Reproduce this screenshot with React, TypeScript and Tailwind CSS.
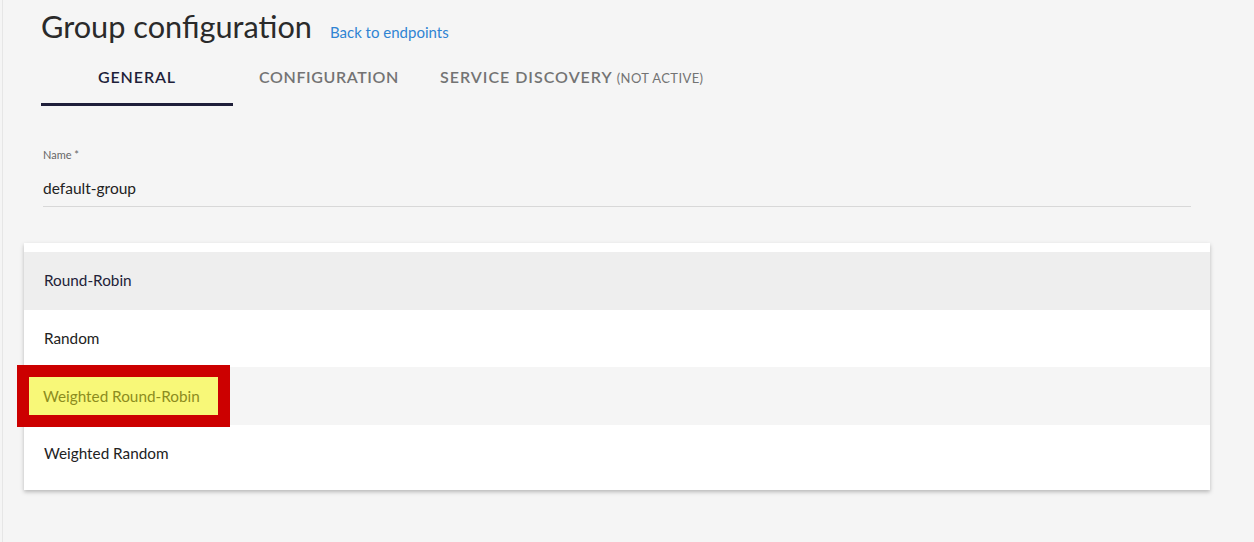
import React from "react";

const font = { fontFamily: '"Lato", "Open Sans", sans-serif' };

export default function App() {
  const items = [
    { label: "Round-Robin", bg: "bg-[#eeeeee]", color: "text-[#222238]" },
    { label: "Random", bg: "bg-white", color: "text-[#222222]" },
    { label: "Weighted Round-Robin", bg: "bg-[#f5f5f5]", color: "text-[#222222]" },
    { label: "Weighted Random", bg: "bg-white", color: "text-[#222222]" },
  ];
  return (
    <div className="relative w-[1254px] h-[542px] bg-[#f5f5f5] overflow-hidden font-['Lato',sans-serif]" style={font}>
      <div className="absolute left-[2px] top-0 bottom-0 w-px bg-[#e6e6e6]" />
      <div className="pl-[41px] pt-[7px]">
        <div className="flex items-baseline h-[40px]">
          <h1 className="text-[30.7px] leading-[40px] text-[#2a2a2a] font-normal">Group configuration</h1>
          <a className="ml-[18px] text-[15px] text-[#2f84d3]">Back to endpoints</a>
        </div>
        <div className="flex h-[59px]">
          <div className="w-[192px] flex flex-col">
            <div className="flex-1 flex items-center justify-center pt-[3px] text-[16px] font-semibold tracking-[0.9px] text-[#1f1f3a]">GENERAL</div>
            <div className="h-[3px] bg-[#1f1f3a]" />
          </div>
          <div className="w-[192px] flex items-center justify-center text-[16px] font-semibold tracking-[0.6px] text-[#737373]">CONFIGURATION</div>
          <div className="flex items-center pl-[15px] pt-[2px] text-[#737373]">
            <span className="text-[16px] font-semibold tracking-[1px] leading-[20px]">
              SERVICE DISCOVERY<span className="ml-[4px] text-[13px] font-normal tracking-[0.4px]">(NOT ACTIVE)</span>
            </span>
          </div>
        </div>
        <div className="ml-[2px] mt-[42px] w-[1148px]">
          <div className="text-[11px] leading-[14px] text-[#666666]">Name *</div>
          <div className="mt-[16px] text-[15.5px] leading-[20px] text-[#222222] pb-[8px] border-b border-[#d8d8d8]">default-group</div>
        </div>
      </div>
      <div className="absolute left-[24px] top-[243px] w-[1186px] bg-white py-[9px] shadow-[0_2px_4px_rgba(0,0,0,0.25)]" style={{ paddingBottom: 8 }}>
        {items.map((it) => (
          <div key={it.label} className={`h-[57.5px] flex items-center pl-[20px] text-[15.3px] ${it.bg} ${it.color}`}>
            {it.label}
          </div>
        ))}
      </div>
      <div className="absolute left-[17px] top-[365px] w-[213px] h-[62px] bg-[#cc0000] p-[12px]">
        <div className="w-full h-full bg-[#f8f878] flex items-center pl-[14px] text-[15.3px] text-[#8c8c1e]">
          Weighted Round-Robin
        </div>
      </div>
    </div>
  );
}
